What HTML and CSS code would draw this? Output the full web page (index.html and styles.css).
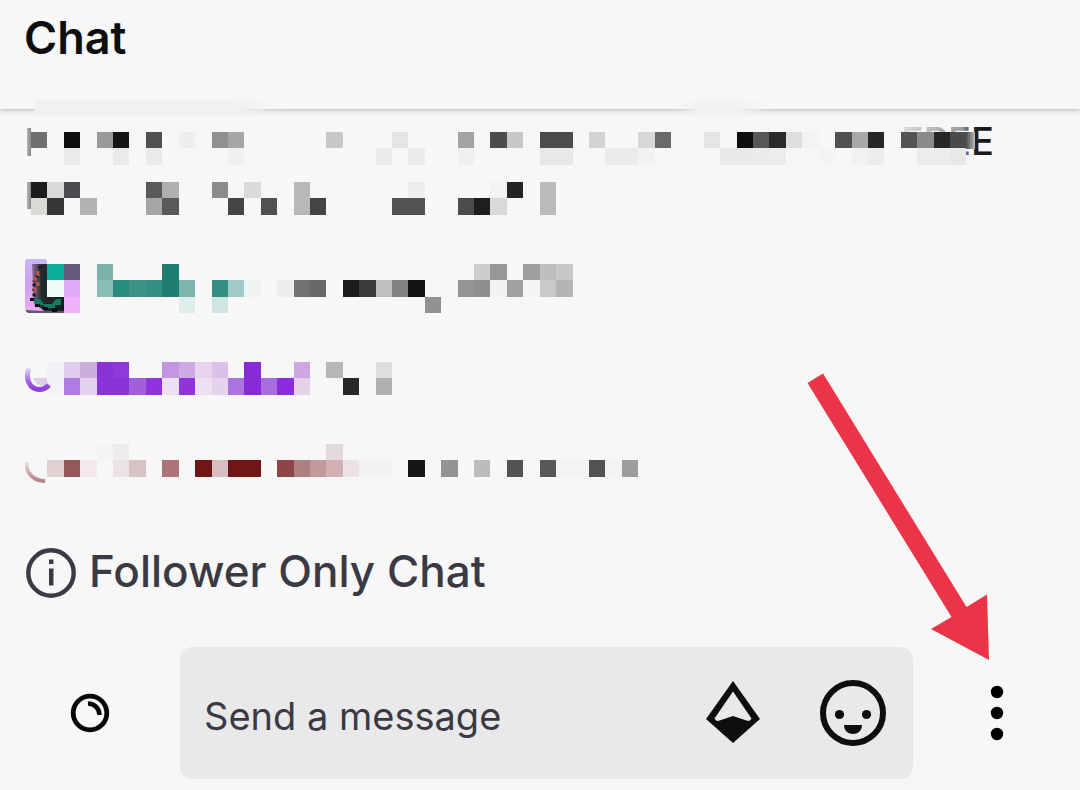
FILE: index.html
```html
<!DOCTYPE html>
<html lang="en">
<head>
<meta charset="utf-8">
<meta name="viewport" content="width=device-width, initial-scale=1">
<title>Chat</title>
<link rel="stylesheet" href="styles.css">
</head>
<body>
<div class="chat">
  <header class="chat-header"><h1 class="chat-title">Chat</h1></header>

  <main class="messages">
    <svg class="message" width="980" height="90" viewBox="0 0 980 90" role="img" aria-label="Hidden message">
      <defs>
        <linearGradient id="fade" gradientUnits="userSpaceOnUse" x1="876" y1="0" x2="958" y2="0">
          <stop offset="0" stop-color="#ddd"/><stop offset=".75" stop-color="#999"/><stop offset=".9" stop-color="#222"/><stop offset="1" stop-color="#18181b"/>
        </linearGradient>
        <linearGradient id="edge"><stop offset="0" stop-color="#999"/><stop offset="1" stop-color="#555"/></linearGradient>
        <linearGradient id="smear"><stop offset="0" stop-color="#4a4a4a"/><stop offset="1" stop-color="#bbb"/></linearGradient>
      </defs>
      <text class="leftover" x="876" y="29" fill="url(#fade)">FREE</text>
      <rect x="2" y="2" width="4" height="28" fill="url(#edge)" opacity=".7"/>
      <rect x="2" y="56" width="4" height="27" fill="url(#edge)" opacity=".7"/>
      <rect x="941" y="6" width="9" height="17" fill="url(#smear)"/>
      <g class="cells" transform="translate(6 6) scale(16.41)">
        <rect x="0" fill="#6f6f6f"/><rect x="2" fill="#0e0e0e"/><rect x="4" fill="#999"/><rect x="5" fill="#161616"/><rect x="7" fill="#505050"/><rect x="9" fill="#eee"/><rect x="11" fill="#909090"/><rect x="12" fill="#a6a6a6"/><rect x="18" fill="#c8c8c8"/><rect x="22" fill="#e5e5e5"/><rect x="26" fill="#a3a3a3"/><rect x="28" fill="#4d4d4d"/><rect x="29" fill="#c8c8c8"/><rect x="31" fill="#4b4b4b"/><rect x="32" fill="#4b4b4b"/><rect x="34" fill="#d4d4d5"/><rect x="37" fill="#d7d7d7"/><rect x="38" fill="#6a6a6a"/><rect x="41" fill="#e5e5e5"/><rect x="43" fill="#0e0e0f"/><rect x="44" fill="#575757"/><rect x="45" fill="#2b2b2b"/><rect x="46" fill="#dedede"/><rect x="47" fill="#f3f3f3"/><rect x="49" fill="#505050"/><rect x="50" fill="#a8a8a8"/><rect x="51" fill="#272727"/><rect x="53" fill="#535353"/><rect x="54" fill="#8a8a8a"/><rect x="55" fill="#272728"/><rect x="56" fill="#4a4a4a"/>
        <rect x="2" y="1" fill="#eaeaea"/><rect x="5" y="1" fill="#eaeaea"/><rect x="7" y="1" fill="#eaeaea"/><rect x="12" y="1" fill="#f0f0f0"/><rect x="21" y="1" fill="#ebebeb"/><rect x="23" y="1" fill="#ebebeb"/><rect x="26" y="1" fill="#efefef"/><rect x="31" y="1" fill="#e8e8e8"/><rect x="32" y="1" fill="#e8e8e8"/><rect x="35" y="1" fill="#ebebeb"/><rect x="36" y="1" fill="#ebebeb"/><rect x="37" y="1" fill="#f2f2f2"/><rect x="42" y="1" fill="#e9e9e9"/><rect x="43" y="1" fill="#e9e9e9"/><rect x="44" y="1" fill="#ebebeb"/><rect x="45" y="1" fill="#ececec"/><rect x="48" y="1" fill="#f4f4f4"/><rect x="50" y="1" fill="#f1f1f1"/><rect x="51" y="1" fill="#ececec"/><rect x="53" y="1" fill="#f7f7f7"/><rect x="54" y="1" fill="#ececec"/><rect x="55" y="1" fill="#ececec"/><rect x="56" y="1" fill="#e8e8e8"/>
      </g>
      <g class="cells" transform="translate(6 56) scale(16.41)">
        <rect x="0" fill="#1c1c1c"/><rect x="1" fill="#d9d9da"/><rect x="2" fill="#4c4c50"/><rect x="7" fill="#595959"/><rect x="8" fill="#b0b0b0"/><rect x="11" fill="#8b8b8b"/><rect x="13" fill="#dadada"/><rect x="16" fill="#b8b8b8"/><rect x="23" fill="#eee"/><rect x="28" fill="#f3f3f3"/><rect x="29" fill="#242427"/><rect x="31" fill="#bbb"/>
        <rect x="0" y="1" fill="#dadad7"/><rect x="1" y="1" fill="#363639"/><rect x="3" y="1" fill="#b2b2b2"/><rect x="7" y="1" fill="#a5a5a5"/><rect x="8" y="1" fill="#59595c"/><rect x="12" y="1" fill="#454547"/><rect x="14" y="1" fill="#505052"/><rect x="16" y="1" fill="#b8b8b8"/><rect x="17" y="1" fill="#444447"/><rect x="22" y="1" fill="#525254"/><rect x="23" y="1" fill="#525254"/><rect x="26" y="1" fill="#4b4b4e"/><rect x="27" y="1" fill="#1e1e20"/><rect x="28" y="1" fill="#d9d9d9"/><rect x="31" y="1" fill="#bbb"/>
      </g>
    </svg>

    <svg class="message" width="980" height="60" viewBox="0 0 980 60" role="img" aria-label="Hidden message">
      <defs>
        <linearGradient id="badge" x2="0" y2="1"><stop offset="0" stop-color="#c9b5fb"/><stop offset=".5" stop-color="#cf9ff0"/><stop offset="1" stop-color="#f0aaf6"/></linearGradient>
        <linearGradient id="body"><stop offset="0" stop-color="#8d6c9b"/><stop offset=".3" stop-color="#222b2d"/><stop offset="1" stop-color="#171b1e"/></linearGradient>
      </defs>
      <rect y="3" width="22" height="53" rx="3" fill="url(#badge)"/>
      <path d="M7 8h15v32h17v17H22Q16 52 9 48z" fill="url(#body)"/>
      <path d="M1 54q12 1 38 1v2H4q-3 0-3-3" fill="#60566a"/>
      <path d="M15 10v5l-3 3v4l-3 3v20" fill="none" stroke="#171a1d" stroke-width="3" stroke-dasharray="3 2"/>
      <path d="M13 15v5m-3 1v4m3 1v4m-3 2v4" stroke="#c95345" stroke-width="3"/>
      <path d="M8 43h7l4 5h8l4-5h5v6h-6v3h-9l-3-3h-6z" fill="#137c64"/>
      <path d="M5 42h4v3H5zm5 6h5v3h-5zm8 3h5v3h-5zm9 1h5v4h-5z" fill="#080b0d"/>
      <g class="cells" transform="translate(6 8) scale(16.41)">
        <rect x="1" fill="#09af99"/><rect x="2" fill="#645b7e"/><rect x="4" fill="#7bb3ab"/><rect x="8" fill="#1d7f72"/><rect x="27" fill="#cdcdcd"/><rect x="28" fill="#979797"/><rect x="30" fill="#9f9f9f"/><rect x="31" fill="#bebebe"/><rect x="32" fill="#c8c8c8"/>
        <rect x="1" y="1" fill="#f0faf7"/><rect x="2" y="1" fill="#deaafa"/><rect x="4" y="1" fill="#8abdb5"/><rect x="5" y="1" fill="#278c7e"/><rect x="6" y="1" fill="#3c9285"/><rect x="7" y="1" fill="#348f82"/><rect x="8" y="1" fill="#1d7f72"/><rect x="9" y="1" fill="#7bb5ad"/><rect x="11" y="1" fill="#338e82"/><rect x="12" y="1" fill="#9fcbc4"/><rect x="13" y="1" fill="#ecf3f1"/><rect x="15" y="1" fill="#ededed"/><rect x="16" y="1" fill="#717171"/><rect x="17" y="1" fill="#686868"/><rect x="19" y="1" fill="#1c1c1e"/><rect x="20" y="1" fill="#3b3b3b"/><rect x="21" y="1" fill="#bfbfbf"/><rect x="22" y="1" fill="#838385"/><rect x="23" y="1" fill="#141416"/><rect x="26" y="1" fill="#959597"/><rect x="27" y="1" fill="#8f8f8f"/><rect x="28" y="1" fill="#f2f2f2"/><rect x="29" y="1" fill="#a1a1a2"/><rect x="30" y="1" fill="#f5f5f5"/><rect x="31" y="1" fill="#c9c9c9"/><rect x="32" y="1" fill="#b4b4b4"/>
        <rect x="2" y="2" fill="#f0b1fa"/><rect x="9" y="2" fill="#e0eeeb"/><rect x="11" y="2" fill="#d1e5e2"/><rect x="24" y="2" fill="#919193"/>
      </g>
    </svg>

    <svg class="message" width="980" height="46" viewBox="0 0 980 46" role="img" aria-label="Hidden message">
      <defs><linearGradient id="violet" x2="0" y2="1"><stop offset="0" stop-color="#e6d8f4"/><stop offset=".6" stop-color="#a566e2"/><stop offset="1" stop-color="#8c3fd8"/></linearGradient></defs>
      <path d="M8 22h14v7q-9 4-14-7" fill="#e0cdea"/>
      <g class="cells" transform="translate(6 6) scale(16.41)">
        <rect x="1" fill="#f3f0f6"/><rect x="2" fill="#dfccee"/><rect x="3" fill="#ccaedd"/><rect x="4" fill="#8c33d8"/><rect x="5" fill="#9039d9"/><rect x="8" fill="#c496e2"/><rect x="9" fill="#ccabe5"/><rect x="10" fill="#e8d3ef"/><rect x="11" fill="#dac1e7"/><rect x="13" fill="#872bd9"/><rect x="16" fill="#cda7e2"/><rect x="18" fill="#b7b7b7"/><rect x="21" fill="#dedede"/>
        <rect x="1" y="1" fill="#f4f2f7"/><rect x="2" y="1" fill="#b07be2"/><rect x="3" y="1" fill="#e3d2ee"/><rect x="4" y="1" fill="#8c33d8"/><rect x="5" y="1" fill="#8c33d8"/><rect x="6" y="1" fill="#a05fdb"/><rect x="7" y="1" fill="#8f33dd"/><rect x="8" y="1" fill="#ecdff3"/><rect x="9" y="1" fill="#8e34d9"/><rect x="10" y="1" fill="#eddef1"/><rect x="11" y="1" fill="#e4d3ed"/><rect x="12" y="1" fill="#ad73df"/><rect x="13" y="1" fill="#872bd9"/><rect x="14" y="1" fill="#a66fdc"/><rect x="15" y="1" fill="#8b2dde"/><rect x="16" y="1" fill="#e4d2e9"/><rect x="19" y="1" fill="#282828"/><rect x="21" y="1" fill="#afafaf"/>
      </g>
      <path d="M4 12C0 22 4 33 14 33.500Q20 33.500 24 29" fill="none" stroke="url(#violet)" stroke-width="5"/>
    </svg>

    <svg class="message" width="980" height="44" viewBox="0 0 980 44" role="img" aria-label="Hidden message">
      <defs><linearGradient id="rose" x2="0" y2="1"><stop offset="0" stop-color="#ebe2e2"/><stop offset="1" stop-color="#b58083"/></linearGradient></defs>
      <path d="M2 20C0 31 9 39 20 39" fill="none" stroke="url(#rose)" stroke-width="4"/>
      <g class="cells" transform="translate(6 2) scale(16.41)">
        <rect x="4" fill="#f4f4f4"/><rect x="5" fill="#eeecec"/><rect x="18" fill="#e4d8da"/>
        <rect x="1" y="1" fill="#e0d1d3"/><rect x="2" y="1" fill="#955759"/><rect x="3" y="1" fill="#f1e9ea"/><rect x="5" y="1" fill="#ebe2e3"/><rect x="6" y="1" fill="#d7c3c4"/><rect x="8" y="1" fill="#ac7477"/><rect x="10" y="1" fill="#701518"/><rect x="11" y="1" fill="#d7bec0"/><rect x="12" y="1" fill="#701619"/><rect x="13" y="1" fill="#701619"/><rect x="15" y="1" fill="#8f4448"/><rect x="16" y="1" fill="#ad8082"/><rect x="17" y="1" fill="#c4999c"/><rect x="18" y="1" fill="#d3b0b4"/><rect x="19" y="1" fill="#ece2e3"/><rect x="20" y="1" fill="#f3f2f2"/><rect x="21" y="1" fill="#f3f2f2"/><rect x="23" y="1" fill="#161617"/><rect x="25" y="1" fill="#949494"/><rect x="27" y="1" fill="#bcbcbc"/><rect x="29" y="1" fill="#535353"/><rect x="31" y="1" fill="#585858"/><rect x="32" y="1" fill="#f3f3f3"/><rect x="33" y="1" fill="#f3f3f3"/><rect x="34" y="1" fill="#525252"/><rect x="35" y="1" fill="#f3f3f3"/><rect x="36" y="1" fill="#9d9d9d"/>
      </g>
    </svg>
  </main>

  <div class="notice">
    <svg width="52" height="52" viewBox="0 0 52 52" aria-hidden="true">
      <circle cx="26" cy="26" r="22.7" fill="none" stroke="#3b3a44" stroke-width="4.4"/>
      <path d="M24 12.5h4.500v4.5H24zM24 21.5h4.500v17H24z" fill="#3b3a44"/>
    </svg>
    <p class="notice-text">Follower Only Chat</p>
  </div>

  <form class="composer">
    <button class="side-button points" type="button" aria-label="Channel points">
      <svg width="40" height="40" viewBox="0 0 40 40" fill="none" stroke="#070707" aria-hidden="true">
        <circle cx="20" cy="20" r="16.8" stroke-width="4.8"/>
        <path d="M18 10.5c6.500 0 11.500 5 11.500 11.500" stroke-width="4.500"/>
      </svg>
    </button>
    <div class="field">
      <input class="field-input" type="text" placeholder="Send a message" aria-label="Send a message">
      <button class="field-button" type="button" aria-label="Cheer with Bits">
        <svg width="56" height="64" viewBox="0 0 56 64" aria-hidden="true">
          <path fill="#0e0e10" fill-rule="evenodd" d="M28 0 55 38 28 62 1 38zM28 10.500 9.500 37.500q1.500 3.500 5 2L28 35 41.500 39.500q3.500 1.500 5-2z"/>
        </svg>
      </button>
      <button class="field-button" type="button" aria-label="Emotes">
        <svg width="66" height="66" viewBox="0 0 66 66" fill="#0e0e10" aria-hidden="true">
          <circle cx="33" cy="33" r="30" fill="none" stroke="#0e0e10" stroke-width="6"/>
          <circle cx="19.500" cy="34.500" r="4.600"/><circle cx="46.500" cy="34.500" r="4.600"/>
          <path d="M24 45h18c0 12-18 12-18 0"/>
        </svg>
      </button>
    </div>
    <button class="side-button more" type="button" aria-label="More options">
      <svg width="14" height="56" viewBox="0 0 14 56" aria-hidden="true"><circle cx="7" cy="7" r="6.200"/><circle cx="7" cy="28" r="6.200"/><circle cx="7" cy="49" r="6.200"/></svg>
    </button>
  </form>

  <svg class="pointer" width="184" height="290" viewBox="0 0 184 290" aria-hidden="true">
    <path fill="#eb3447" d="M1.500 13 17 3.500 160.500 237 181 224.500 183 290 125 259 145.500 247z"/>
  </svg>
</div>
</body>
</html>
```
FILE: styles.css
```css
* {
  box-sizing: border-box;
}

body {
  margin: 0;
  background: #f7f7f7;
  color: #0e0e10;
  font-family: Inter, "Liberation Sans", sans-serif;
}

.chat {
  position: relative;
  display: flex;
  flex-direction: column;
  min-height: 100vh;
}

.chat-header {
  position: relative;
  padding: 10px 24px 43px;
  background: #f7f7f7;
  box-shadow: 0 1px 5px rgba(0, 0, 0, 0.28);
}

/* Soft smudges that lie over the header's shadow */
.chat-header::before,
.chat-header::after {
  content: "";
  position: absolute;
  bottom: -7px;
  height: 16px;
  background: #f1f1f1;
  box-shadow: 0 0 3px 1px #f3f3f3;
}

.chat-header::before {
  left: 34px;
  width: 250px;
  background: linear-gradient(to right, #f1f1f1 80%, transparent);
  box-shadow: none;
}

.chat-header::after {
  left: 676px;
  width: 96px;
  background: linear-gradient(to right, transparent, #f2f2f2 25%, #f2f2f2 60%, transparent);
  box-shadow: none;
}

.chat-title {
  margin: 0;
  font-size: 45px;
  line-height: 56px;
  font-weight: 600;
}

.messages {
  display: flex;
  flex: 1;
  flex-direction: column;
  gap: 40px;
  padding: 17px 25px 0;
}

.message {
  display: block;
  max-width: 100%;
}

.cells rect {
  width: 1px;
  height: 1px;
  shape-rendering: crispEdges;
}

.leftover {
  font-size: 38px;
  font-weight: 500;
}

.notice {
  display: flex;
  align-items: center;
  gap: 12px;
  padding: 0 25px;
  color: #3b3a44;
}

.notice-text {
  margin: 0;
  padding-bottom: 4px;
  font-size: 44px;
  line-height: 48px;
  font-weight: 500;
}

.composer {
  display: flex;
  align-items: stretch;
  padding: 48px 0 11px;
}

button {
  display: flex;
  flex: none;
  align-items: center;
  justify-content: center;
  padding: 0;
  border: 0;
  background: none;
}

.points {
  width: 180px;
}

.more {
  width: 167px;
}

.field {
  display: flex;
  flex: 1;
  min-width: 0;
  min-height: 132px;
  border-radius: 12px;
  background: #e9e9e9;
}

.field-input {
  flex: 1;
  min-width: 0;
  padding: 6px 0 0 24px;
  border: 0;
  outline: 0;
  background: none;
  color: #3b3a44;
  font: 400 38px/48px Inter, "Liberation Sans", sans-serif;
}

.field-input::placeholder {
  color: #3b3a44;
  opacity: 1;
}

.field-button {
  width: 120px;
}

.pointer {
  position: absolute;
  right: 90px;
  bottom: 130px;
  pointer-events: none;
}
```
